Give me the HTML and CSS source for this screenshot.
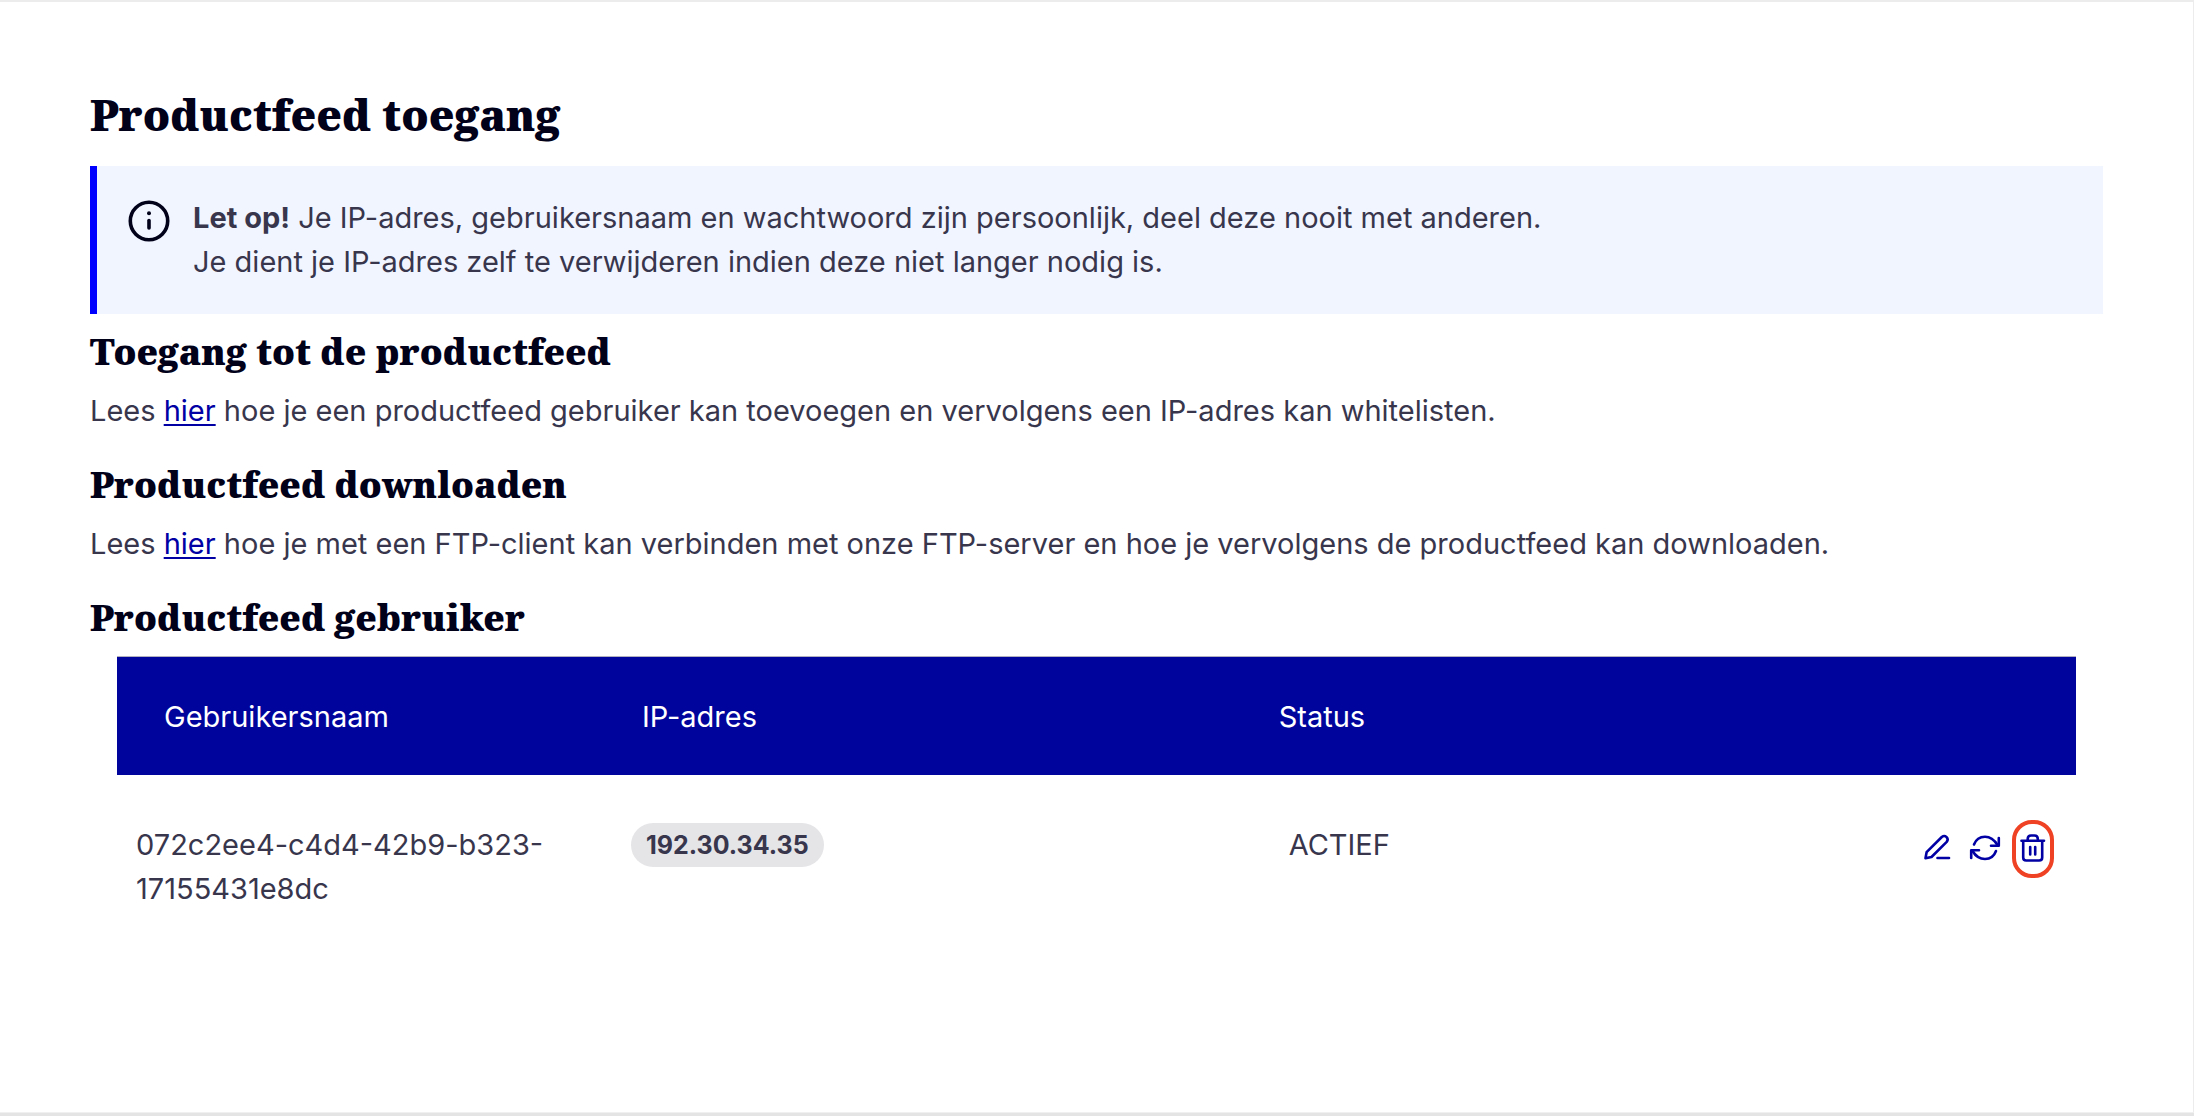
FILE: index.html
```html
<!DOCTYPE html>
<html lang="nl">
<head>
<meta charset="utf-8">
<meta name="viewport" content="width=device-width, initial-scale=1">
<title>Productfeed toegang</title>
<link rel="stylesheet" href="styles.css">
</head>
<body>
<main class="card">
  <h1 class="title">Productfeed toegang</h1>
  <div class="callout">
    <svg class="callout-icon" viewBox="0 0 42 42" aria-hidden="true">
      <circle cx="21" cy="21" r="18.700" fill="none" stroke="currentColor" stroke-width="3.6"/>
      <circle cx="21" cy="13.200" r="2" fill="currentColor"/>
      <path d="M21 20.500v7.500" stroke="currentColor" stroke-width="3.6" stroke-linecap="round"/>
    </svg>
    <p class="text"><strong>Let op!</strong> Je IP-adres, gebruikersnaam en wachtwoord zijn persoonlijk, deel deze nooit met anderen.<br>Je dient je IP-adres zelf te verwijderen indien deze niet langer nodig is.</p>
  </div>

  <section class="section">
    <h2 class="heading">Toegang tot de productfeed</h2>
    <p class="text">Lees <a class="link" href="#toegang">hier</a> hoe je een productfeed gebruiker kan toevoegen en vervolgens een IP-adres kan whitelisten.</p>
  </section>

  <section class="section">
    <h2 class="heading">Productfeed downloaden</h2>
    <p class="text">Lees <a class="link" href="#downloaden">hier</a> hoe je met een FTP-client kan verbinden met onze FTP-server en hoe je vervolgens de productfeed kan downloaden.</p>
  </section>

  <section class="section">
    <h2 class="heading">Productfeed gebruiker</h2>
    <div class="table-wrap">
      <table class="users">
        <thead>
          <tr>
            <th class="col-name" scope="col">Gebruikersnaam</th>
            <th class="col-ip" scope="col">IP-adres</th>
            <th class="col-status" scope="col">Status</th>
            <td class="col-actions"></td>
          </tr>
        </thead>
        <tbody>
          <tr>
            <td class="cell-name">072c2ee4-c4d4-42b9-b323-<wbr>17155431e8dc</td>
            <td class="cell-ip"><span class="badge">192.30.34.35</span></td>
            <td class="cell-status">ACTIEF</td>
            <td class="cell-actions">
              <div class="actions">
                <button class="action" type="button" aria-label="Bewerken">
                  <svg class="icon" viewBox="0 2 32 32" aria-hidden="true">
                    <path d="M4.500 27.200L5.600 21.200L20.800 6Q23.300 4 25.600 6.100Q27.700 8.400 25.700 10.900L10.500 26Z"/>
                    <path d="M16.500 27h11.500"/>
                  </svg>
                </button>
                <button class="action" type="button" aria-label="Vernieuwen">
                  <svg class="icon" viewBox="0 2 32 32" aria-hidden="true">
                    <path d="M5 13.500C7 8.200 11.200 5.700 16 5.700C21 5.700 25.500 9 28.500 14"/>
                    <path d="M29.800 7v7.700h-7.800"/>
                    <path d="M27 20C25 25.500 21 28 16 28C11 28 6.500 25 3.500 20"/>
                    <path d="M2.200 27v-7.700h7.800"/>
                  </svg>
                </button>
                <button class="action action-marked" type="button" aria-label="Verwijderen">
                  <svg class="icon" viewBox="0 2 32 32" aria-hidden="true">
                    <path d="M4.500 9.700h22.500"/>
                    <path d="M10.700 9.500V8Q10.700 4.500 14 4.500h3.500Q20.800 4.500 20.800 8v1.500"/>
                    <path d="M6.200 10.500V26.500Q6.200 29.500 9.200 29.500H22.200Q25.200 29.500 25.200 26.500V10.500"/>
                    <path d="M13.200 16v7.500M18.200 16v7.500"/>
                  </svg>
                </button>
              </div>
            </td>
          </tr>
        </tbody>
      </table>
    </div>
  </section>
</main>
</body>
</html>
```
FILE: styles.css
```css
* {
  box-sizing: border-box;
}

body {
  margin: 0;
  min-height: 100vh;
  display: flex;
  flex-direction: column;
  background: #fff;
  color: #38364d;
  font-family: Inter, "Liberation Sans", sans-serif;
  font-size: 29px;
  line-height: 44px;
  border-bottom: 3px solid #e4e4e4;
}

.card {
  flex: 1;
  padding: 83px 90px 60px;
  border-top: 2px solid #ececec;
  border-right: 1px solid #ececec;
  border-bottom: 1px solid #f0f0f0;
}

.title,
.heading {
  margin: 0;
  color: #02011a;
  font-family: "Noto Serif", "DejaVu Serif Condensed", "DejaVu Serif", serif;
  font-weight: 900;
}

.title {
  margin-bottom: 21px;
  font-size: 43px;
  line-height: 60px;
}

.heading {
  font-size: 36px;
  line-height: 50px;
}

.text {
  margin: 0;
}

.callout {
  display: flex;
  gap: 23px;
  margin-bottom: 13px;
  padding: 30px 31px;
  background: #f1f5ff;
  border-left: 7px solid #0000ff;
}

.callout-icon {
  flex: none;
  width: 42px;
  height: 42px;
  margin-top: 4px;
  color: #02011a;
}

.section {
  margin-bottom: 27px;
}

.section .text {
  margin-top: 12px;
}

.link {
  color: #0000a4;
  text-decoration: underline;
  text-decoration-thickness: 2px;
  text-underline-offset: 3px;
}

.table-wrap {
  margin: 13px 27px 0;
}

.users {
  width: 100%;
  table-layout: fixed;
  border-collapse: separate;
  border-spacing: 0;
}

.users thead {
  background: #00049c;
  color: #fff;
}

.users th,
.users td {
  padding: 48px 0;
  text-align: left;
  vertical-align: top;
  font-weight: 400;
}

.users thead th,
.users thead td {
  padding: 38px 47px 36px;
  border-top: 1px solid #b0b0c0;
}

.users .col-name {
  width: 24.4%;
}

.users .col-ip {
  width: 32.5%;
}

.users .col-actions {
  width: 13%;
}

.users .cell-name {
  padding-left: 19px;
}

.users .cell-ip {
  padding-left: 36px;
}

.users .cell-status {
  padding-left: 57px;
}

.users .cell-actions {
  padding: 45px 22px 0 0;
}

.badge {
  display: inline-block;
  padding: 0 15px;
  border-radius: 22px;
  background: #e5e5e8;
  font-size: 25px;
  font-weight: 700;
  vertical-align: top;
}

.actions {
  display: flex;
  justify-content: flex-end;
  gap: 6px;
}

.action {
  display: flex;
  align-items: center;
  justify-content: center;
  width: 42px;
  height: 58px;
  padding: 0;
  border: 4px solid transparent;
  border-radius: 20px;
  background: none;
  color: #0000a4;
  cursor: pointer;
}

.action-marked {
  border-color: #ef4123;
}

.icon {
  flex: none;
  width: 32px;
  height: 32px;
  fill: none;
  stroke: currentColor;
  stroke-width: 2.6;
  stroke-linecap: round;
  stroke-linejoin: round;
}
```
